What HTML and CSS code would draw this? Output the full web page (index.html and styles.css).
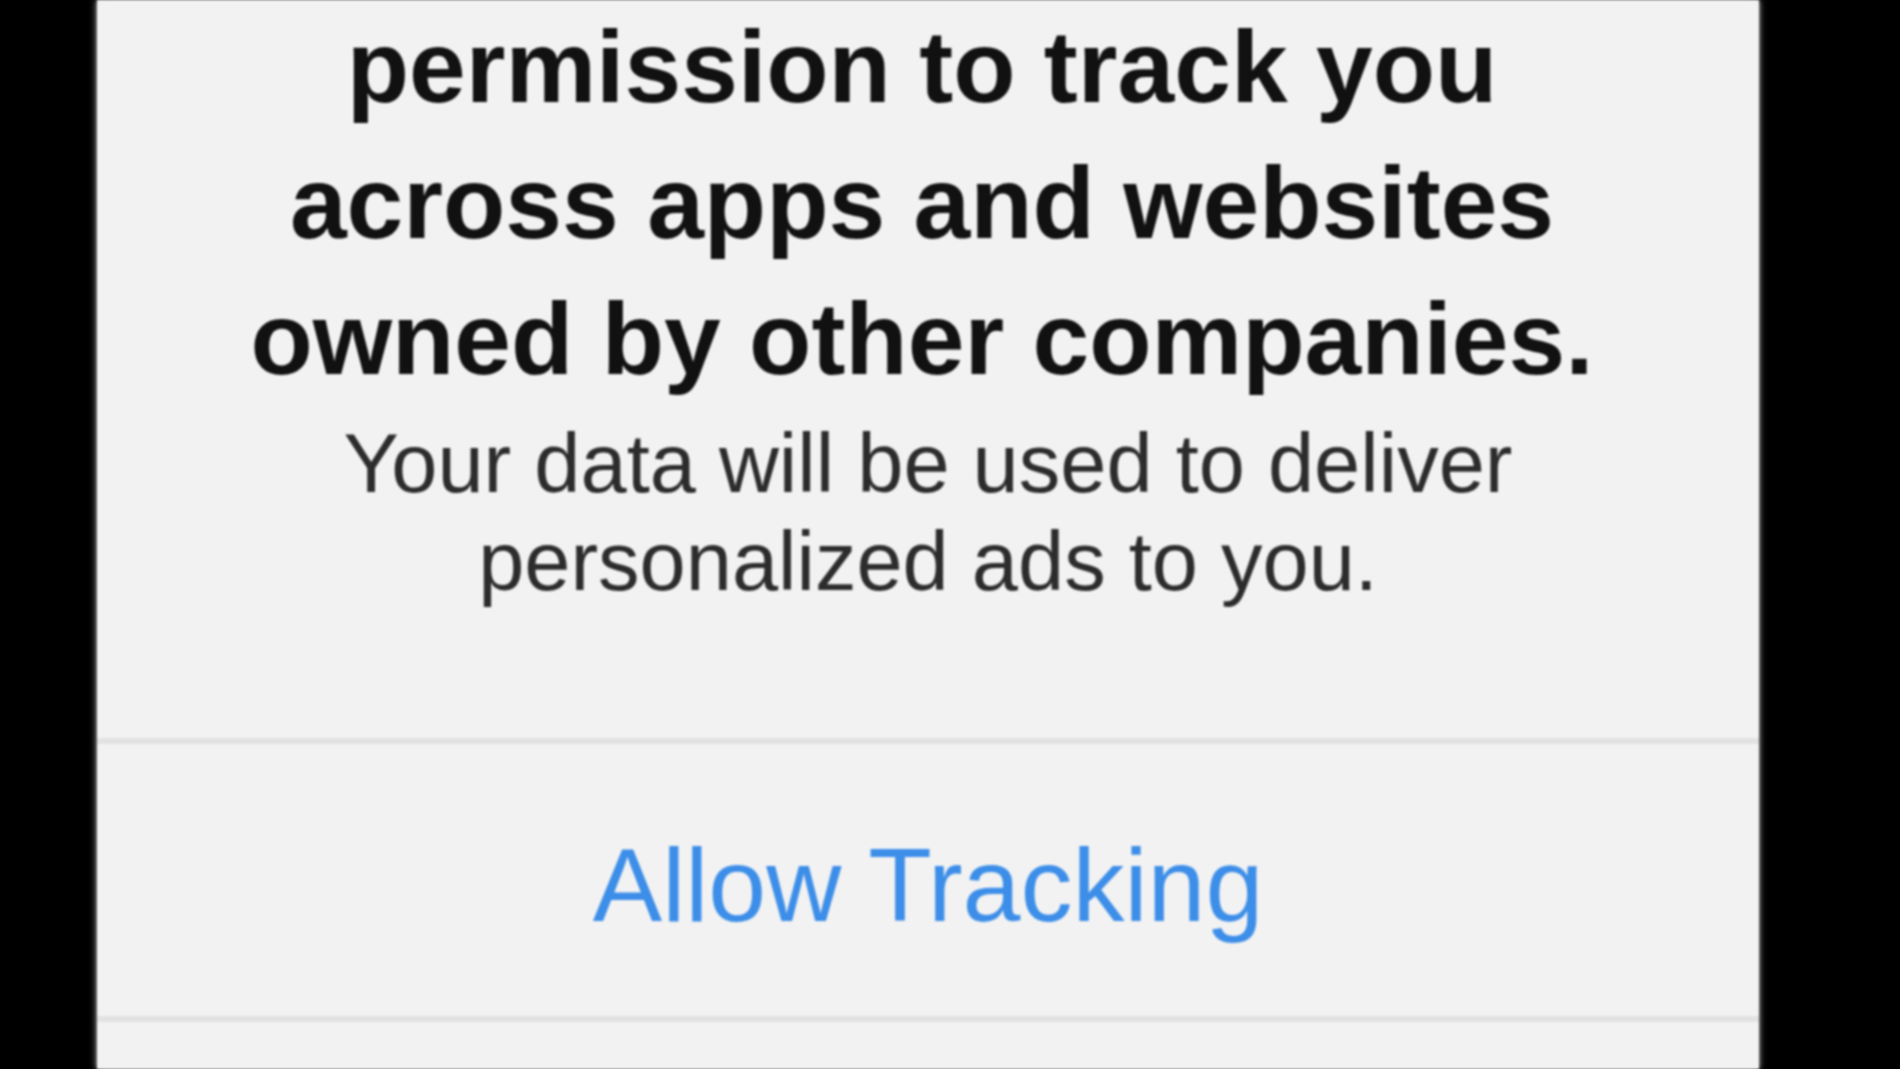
FILE: index.html
```html
<html lang="en">
<head>
  <meta charset="UTF-8">
  <title>Allow Tracking</title>
  <link rel="stylesheet" href="styles.css">
</head>
<body>

  <div class="screen">
    <div class="alert">
      <div class="message">
        <h1>permission to track you<br>across apps and websites<br>owned by other companies.</h1>
        <p class="detail">Your data will be used to deliver<br>personalized ads to you.</p>
      </div>

      <div class="action">Allow Tracking</div>
      <div class="action action-next"></div>
    </div>
  </div>

</body>
</html>
```

FILE: styles.css
```css
html, body {
  margin: 0;
  padding: 0;
  height: 100%;
  background: #000;
  overflow: hidden;
}

.screen {
  height: 100%;
  padding: 0 141px 0 97px;
  font-family: 'Liberation Sans', Arial, sans-serif;
}

.alert {
  height: 100%;
  display: flex;
  flex-direction: column;
  background: #f2f2f2;
  text-align: center;
  filter: blur(1px);
  box-shadow: 0 0 6px #cfcfcf;
}

.message {
  padding-bottom: 127px;
}

h1 {
  margin: -1px 0 0;
  padding-right: 12px;
  font-size: 102px;
  line-height: 136px;
  font-weight: 700;
  color: #111;
}

.detail {
  margin: 8px 0 0;
  font-size: 83px;
  line-height: 98px;
  color: #2c2c2c;
}

.action {
  border-top: 6px solid #e2e2e2;
  padding: 83px 0 73px;
  font-size: 104px;
  line-height: 116px;
  color: #3c8ee9;
}

.action-next {
  flex: 1;
  padding: 0;
}
```
